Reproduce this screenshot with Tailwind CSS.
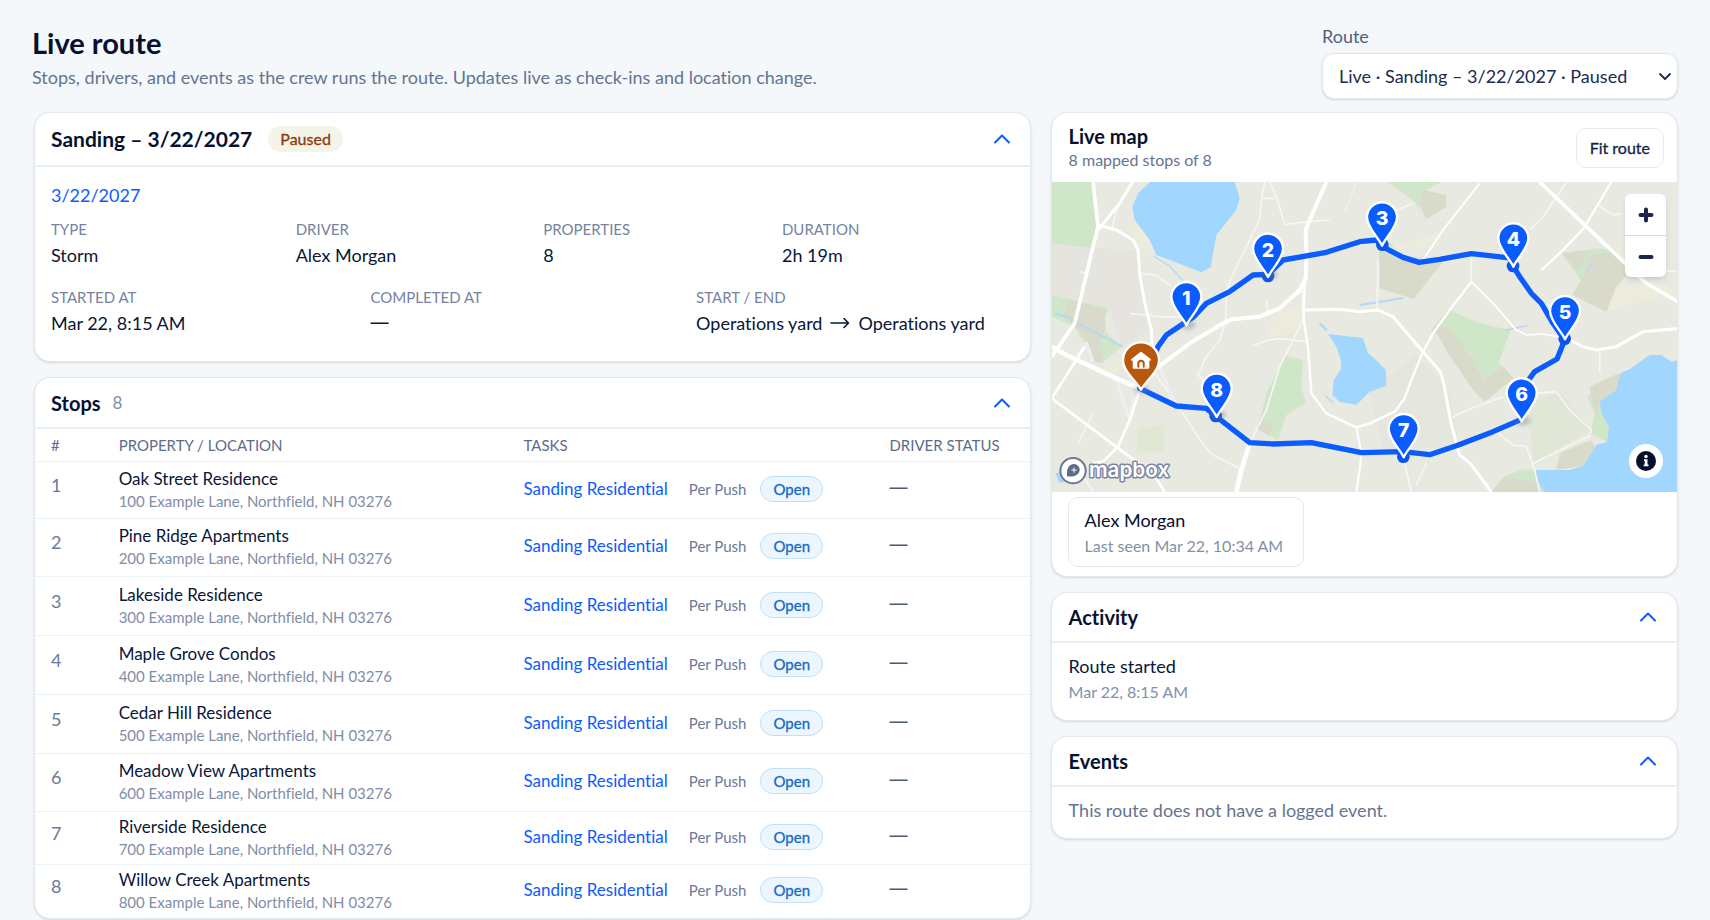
<!DOCTYPE html>
<html lang="en">
<head>
<meta charset="utf-8">
<meta name="viewport" content="width=device-width, initial-scale=1">
<title>Live route</title>
<script src="https://cdn.jsdelivr.net/npm/@tailwindcss/browser@4"></script>
</head>
<body class="min-h-screen bg-[#f4f8fb] font-['Lato',sans-serif] text-[18px] leading-6 text-[#0a1738] [font-variant-ligatures:none]">
<div class="flex flex-col px-8 pt-6">
  <header class="flex items-start justify-between">
    <div class="pt-[3px]">
      <h1 class="text-[29px] leading-8 font-bold text-[#06112f]">Live route</h1>
      <p class="mt-1.5 leading-6 text-[#64748f]">Stops, drivers, and events as the crew runs the route. Updates live as check-ins and location change.</p>
    </div>
    <div class="flex w-[356px] flex-col gap-[5px]">
      <label for="route" class="leading-6 text-[#4f5f80]">Route</label>
      <div class="relative">
        <select id="route" class="block h-[46px] w-full appearance-none rounded-xl border border-[#dfe6ef] bg-white pr-10 pl-4 text-[18px] text-[#1c2b50] shadow-sm">
          <option>Live · Sanding – 3/22/2027 · Paused</option>
        </select>
        <svg class="pointer-events-none absolute top-4 right-1.5 size-3.5" viewBox="0 0 14 14" fill="none" stroke="#1c2b50" stroke-width="1.800" stroke-linecap="round" stroke-linejoin="round"><path d="M2 5 7 10 12 5"/></svg>
      </div>
    </div>
  </header>

  <main class="mt-[13px] grid grid-cols-[996fr_627fr] items-start gap-5 pl-[2px]">
    <div class="flex min-w-0 flex-col gap-[15px]">
      <section class="rounded-2xl border border-[#e2e8f0] bg-white shadow-sm">
        <div class="flex h-[54px] items-center justify-between border-b-2 border-[#eaeff4] px-4">
          <div class="flex items-center gap-4">
            <h2 class="text-[21px] leading-7 font-bold text-[#06112f]">Sanding – 3/22/2027</h2>
            <span class="rounded-full bg-[#f4f4e8] px-3 text-[16px] leading-[26px] text-[#8f3a0b] [-webkit-text-stroke:0.3px]">Paused</span>
          </div>
          <button type="button" aria-label="Collapse route details" class="flex size-6 items-center justify-center"><svg class="h-4 w-5" viewBox="0 0 20 16" fill="none" stroke="#0b5cff" stroke-width="2" stroke-linecap="round" stroke-linejoin="round"><path d="M3 11.500 10 4.500 17 11.500"/></svg></button>
        </div>
        <div class="px-4 pt-4 pb-[26px]">
          <a href="#" class="block leading-6 text-[#0b5cff]">3/22/2027</a>
          <dl class="mt-2.5 grid grid-cols-[245fr_248fr_239fr_232fr]">
            <div><dt class="text-[15px] leading-6 text-[#75839f]">TYPE</dt><dd class="mt-0.5 leading-6">Storm</dd></div>
            <div><dt class="text-[15px] leading-6 text-[#75839f]">DRIVER</dt><dd class="mt-0.5 leading-6">Alex Morgan</dd></div>
            <div><dt class="text-[15px] leading-6 text-[#75839f]">PROPERTIES</dt><dd class="mt-0.5 leading-6">8</dd></div>
            <div><dt class="text-[15px] leading-6 text-[#75839f]">DURATION</dt><dd class="mt-0.5 leading-6">2h 19m</dd></div>
          </dl>
          <dl class="mt-[18px] grid grid-cols-[320fr_326fr_318fr]">
            <div><dt class="text-[15px] leading-6 text-[#75839f]">STARTED AT</dt><dd class="mt-0.5 leading-6">Mar 22, 8:15 AM</dd></div>
            <div><dt class="text-[15px] leading-6 text-[#75839f]">COMPLETED AT</dt><dd class="mt-0.5 font-['Inter',sans-serif] leading-6">—</dd></div>
            <div><dt class="text-[15px] leading-6 text-[#75839f]">START / END</dt><dd class="mt-0.5 flex items-center gap-2 leading-6 whitespace-nowrap">Operations yard <svg class="h-3 w-5" viewBox="0 0 20 12" fill="none" stroke="#0a1738" stroke-width="1.600" stroke-linecap="round" stroke-linejoin="round" role="img" aria-label="to"><path d="M1 6H18.500M14 1.500 18.500 6 14 10.500"/></svg> Operations yard</dd></div>
          </dl>
        </div>
      </section>

      <section class="rounded-2xl border border-[#e2e8f0] bg-white shadow-sm">
        <div class="flex h-[51px] items-center justify-between border-b-2 border-[#eaeff4] px-4">
          <div class="flex items-center gap-3">
            <h2 class="text-[20px] leading-6 font-bold text-[#06112f]">Stops</h2>
            <span class="text-[17px] text-[#8090aa]">8</span>
          </div>
          <button type="button" aria-label="Collapse stops" class="flex size-6 items-center justify-center"><svg class="h-4 w-5" viewBox="0 0 20 16" fill="none" stroke="#0b5cff" stroke-width="2" stroke-linecap="round" stroke-linejoin="round"><path d="M3 11.500 10 4.500 17 11.500"/></svg></button>
        </div>
        <table class="w-full table-fixed border-collapse text-left">
          <colgroup><col class="w-[6.800%]"><col class="w-[40.700%]"><col class="w-[36.800%]"><col></colgroup>
          <thead>
            <tr class="h-8 border-b border-[#edf1f6] text-[15px] text-[#5d6c8b]">
              <th class="pl-4 font-normal">#</th>
              <th class="pl-4 font-normal">PROPERTY / LOCATION</th>
              <th class="pl-4 font-normal">TASKS</th>
              <th class="pl-4 font-normal">DRIVER STATUS</th>
            </tr>
          </thead>
          <tbody id="stops"></tbody>
        </table>
      </section>
    </div>

    <div class="flex min-w-0 flex-col gap-[15px]">
      <section class="overflow-hidden rounded-2xl border border-[#e2e8f0] bg-white shadow-sm">
        <div class="flex h-[69px] items-center justify-between pr-[13px] pl-[17px]">
          <div>
            <h2 class="text-[20px] leading-6 font-bold text-[#06112f]">Live map</h2>
            <p class="text-[16px] leading-6 text-[#64748f]">8 mapped stops of 8</p>
          </div>
          <button type="button" class="h-10 rounded-[10px] border border-[#e2e8f0] px-[13px] text-[16px] text-[#14234a] [-webkit-text-stroke:0.3px]">Fit route</button>
        </div>
        <div class="relative">
          <svg class="block h-[310px] w-full bg-[#e8eae2]" viewBox="6 6 1878 930" preserveAspectRatio="xMidYMid slice" role="img" aria-label="Map of the route with eight stops">
            <defs>
              <pattern id="scrub" width="8" height="8" patternUnits="userSpaceOnUse"><rect width="8" height="8" fill="#dfe1d3"/><rect width="4" height="4" fill="#d3d3c2"/><rect x="4" y="4" width="4" height="4" fill="#d3d3c2"/></pattern>
              <path id="pin" d="M0 3C-10-20-45-52-45-82A45 45 0 1 1 45-82C45-52 10-20 0 3Z" fill="#0b5cff" stroke="#fff" stroke-width="7" stroke-linejoin="round"/>
              <filter id="soft" x="-50%" y="-50%" width="200%" height="200%"><feGaussianBlur stdDeviation="6"/></filter>
            </defs>
            <!-- land cover -->
            <path d="M6 190 125 205 262 210 280 285 300 450 215 500 180 385 6 345Z" fill="#e5e4df"/>
            <path d="M960 640 1100 520 1200 640 1230 800 1000 810Z" fill="#e5e7df"/>
            <g fill="#cfe7c8">
              <path d="M6 6H130L143 140 125 205 6 190Z"/>
              <path d="M6 345 178 385 152 440 215 500 160 545 130 535 75 440 6 410Z"/>
              <path d="M705 528 760 540 755 620 768 670 710 705 685 780 625 745 650 640Z"/>
              <path d="M1015 6H1175L1130 30 1105 80 1115 110 1095 65Z"/>
              <path d="M1535 218 1650 205 1690 210 1725 265 1670 385 1600 310Z"/>
              <path d="M1195 388 1290 430 1382 450 1347 550 1390 595 1310 610 1230 500 1145 450Z"/>
              <path d="M1645 610 1740 568 1805 525 1760 590 1690 660 1680 790 1622 760 1635 700 1613 650Z"/>
              <path d="M1325 936 1370 885 1420 868 1462 870 1490 936Z"/>
              <path d="M985 170 1030 195 1010 250 990 260Z"/>
            </g>
            <path d="M1435 665 1530 635 1622 750 1450 850Z" fill="#e0e7d7"/>
            <g fill="#ecebdc">
              <path d="M230 135 275 125 318 215 270 205 255 170Z"/>
              <path d="M685 395 757 370 752 445 660 475 645 465Z"/>
              <path d="M1690 318 1835 310 1880 335 1675 392Z"/>
              <path d="M1020 175 1060 195 1180 150 1150 205 1040 205Z"/>
              <path d="M1690 190 1720 185 1730 270Z"/>
              <path d="M210 530 200 580 160 570Z"/>
            </g>
            <path d="M265 745 345 735 340 815 260 820Z" fill="#dee8d2"/>
            <g fill="url(#scrub)">
              <path d="M60 360 165 388 168 450 150 480 160 550 130 545 100 460 40 410Z"/>
              <path d="M630 718 668 730 660 768 622 748Z"/>
              <path d="M1120 30 1190 45 1190 80 1130 118 1108 75Z"/>
              <path d="M990 215 1180 245 1092 357 990 325Z"/>
              <path d="M1542 225 1590 212 1620 215 1580 275Z"/>
              <path d="M1620 225 1690 215 1745 270 1700 320 1670 395 1568 345 1600 290Z"/>
              <path d="M1150 440 1200 445 1262 530 1302 600 1362 560 1392 595 1305 665 1270 630 1195 520Z"/>
              <path d="M1620 620 1708 580 1705 630 1650 665 1640 712Z"/>
              <path d="M1530 820 1625 780 1635 800 1600 858 1520 870Z"/>
              <path d="M1325 936 1362 890 1455 905 1480 936Z"/>
            </g>
            <!-- water -->
            <g fill="#a1d6ff">
              <path d="M302 6H555L570 55 560 90 500 165 483 262 455 277 385 250 320 225 300 180 255 120 248 80 265 40Z"/>
              <path d="M835 462 940 474 955 520 985 545 1008 570 1010 618 960 635 920 675 870 665 848 645 852 600 872 570 875 545 860 500Z"/>
              <path d="M1800 525H1835L1865 545 1885 540V936H1485L1460 900 1458 870 1560 870 1600 858 1640 795 1672 785 1678 740 1655 700 1650 665 1700 630 1712 580 1740 568Z"/>
              <path d="M18 880 40 875 50 905 28 908Z"/>
            </g>
            <g fill="none" stroke="#b4d8f3" stroke-width="4">
              <path d="M15 400 50 410 100 440 220 500" stroke-width="6"/>
              <path d="M310 228 360 258 400 302"/>
              <path d="M810 430 832 452" stroke-width="8"/>
              <path d="M930 375 985 367 1062 353" stroke-width="6"/>
              <path d="M1370 450 1435 436"/><path d="M1635 245 1605 280"/>
              <path d="M825 645 850 668"/>
            </g>
            <!-- minor roads -->
            <g fill="none" stroke="#f6f6f2" stroke-width="5" stroke-linejoin="round">
              <path d="M600 790 650 690 690 560 760 420 758 335 735 345"/>
              <path d="M300 560 370 655 465 800 490 825 575 868"/>
              <path d="M660 6 680 50 705 133 780 125 840 120"/><path d="M645 6 635 60 630 120 560 260 530 330 528 420 510 480 470 530 445 585 460 600"/><path d="M635 55H675"/>
              <path d="M240 400 350 412 430 408M275 280 320 285 365 320M90 275 107 280M185 150 205 75"/>
              <path d="M610 497 650 482 690 475 770 485"/><path d="M920 10 885 95" stroke-width="3"/>
              <path d="M985 240 982 390M1265 305V222M1550 6 1480 110 1440 150M1750 265 1885 275M1645 75 1690 105 1720 100"/>
              <path d="M1210 710 1265 685 1360 650M1450 640 1520 635 1560 690 1625 750 1620 768 1450 850"/>
              <path d="M1340 755 1390 795 1430 800 1455 870 1470 936M1060 830 1085 936M1130 850 1100 915M1650 510V580M650 360 655 400"/>
              <path d="M85 790 130 700M90 870 130 936M1020 100 1090 70"/>
              <path d="M70 540 110 490 130 545M200 600 240 720 250 640M330 560 370 660 280 640" stroke="#eeeef0" stroke-width="10"/>
            </g>
            <!-- main roads -->
            <g fill="none" stroke="#fff" stroke-width="9" stroke-linejoin="round">
              <path d="M130 6 145 140 130 200 75 430 6 530" stroke-width="11"/>
              <path d="M248 6 210 70 145 150"/>
              <path d="M145 135 200 150 250 180 265 210 270 280 285 370 305 450 308 520"/>
              <path d="M6 500 60 530 200 595 270 625" stroke-width="14"/>
              <path d="M320 565 420 490 520 430 545 418 630 410 690 385 750 330 768 295 770 230 768 150 780 120 830 6" stroke-width="12"/>
              <path d="M270 630 240 720 205 800 160 845 130 850" stroke-width="8"/>
              <path d="M6 655 210 808 310 880 345 936M6 655 105 500" stroke-width="8"/>
              <path d="M600 790 575 870 560 936" stroke-width="14"/>
              <path d="M765 390 870 388 930 395 985 390 1030 410 1120 515 1172 575 1182 610 1205 735 1230 825 1262 850 1325 936"/>
              <path d="M765 300 762 420 775 500 785 640 830 700 920 742 960 730 1035 695 1065 655 1085 600 1120 515 1150 460 1200 390 1265 305" stroke-width="7"/>
              <path d="M920 742 935 820 930 870 920 936" stroke-width="6"/>
              <path d="M1470 6 1600 130 1700 225 1790 310 1885 365" stroke-width="11"/>
              <path d="M1685 6 1602 145 1535 215 1475 270" stroke-width="7"/>
              <path d="M1290 10 1180 150 1120 240" stroke-width="6"/>
              <path d="M1265 305 1330 370 1400 450 1430 465 1480 462 1550 475" stroke-width="5"/>
              <path d="M1550 475 1600 500 1640 510 1700 500 1780 455 1885 445"/>
            </g>
            <!-- route -->
            <path d="M270 625 380 678 470 685 500 710 600 788 670 792 785 788 935 818 1060 815 1140 824 1220 797 1330 755 1415 718 1440 595 1455 575 1522 537 1545 480 1510 430 1475 370 1445 340 1410 290 1390 258 1390 235 1345 230 1265 221 1170 238 1108 247 1060 232 998 200 980 180 930 185 830 217 700 240 655 283 610 285 540 335 470 370 430 412 350 465 325 500 270 625" fill="none" stroke="#0b5cff" stroke-width="16" stroke-linejoin="round" stroke-linecap="round"/>
            <g fill="#0b55ea"><circle cx="655" cy="288" r="19"/><circle cx="998" cy="194" r="19"/><circle cx="1390" cy="258" r="19"/><circle cx="1545" cy="476" r="19"/><circle cx="1061" cy="830" r="19"/><circle cx="498" cy="708" r="19"/></g>
            <g fill="#6b7487" opacity=".4" filter="url(#soft)"><ellipse cx="415" cy="434" rx="22" ry="14"/><ellipse cx="1420" cy="722" rx="22" ry="14"/><ellipse cx="660" cy="284" rx="24" ry="12"/><ellipse cx="505" cy="704" rx="24" ry="12"/><ellipse cx="275" cy="628" rx="22" ry="12"/></g>
            <g class="font-['Inter',sans-serif] text-[58px] font-extrabold" fill="#fff" text-anchor="middle">
              <g transform="translate(410 433)"><use href="#pin"/><text y="-58">1</text></g>
              <g transform="translate(655 288)"><use href="#pin"/><text y="-58">2</text></g>
              <g transform="translate(997 194)"><use href="#pin"/><text y="-58">3</text></g>
              <g transform="translate(1391 257)"><use href="#pin"/><text y="-58">4</text></g>
              <g transform="translate(1546 475)"><use href="#pin"/><text y="-58">5</text></g>
              <g transform="translate(1416 722)"><use href="#pin"/><text y="-58">6</text></g>
              <g transform="translate(1062 829)"><use href="#pin"/><text y="-58">7</text></g>
              <g transform="translate(501 708)"><use href="#pin"/><text y="-58">8</text></g>
            </g>
            <!-- depot -->
            <g transform="translate(274 627)">
              <path d="M0 2C-12-22-54-52-54-86A54 54 0 1 1 54-86C54-52 12-22 0 2Z" fill="#b9570c" stroke="#fff" stroke-width="7" stroke-linejoin="round"/>
              <path d="M-22-88H-27L0-109 27-88H22V-64H-22Z" fill="#fff" stroke="#fff" stroke-width="6" stroke-linejoin="round"/>
              <path d="M-8-67V-77A8 8 0 0 1 8-77V-67" fill="none" stroke="#b9570c" stroke-width="6" stroke-linecap="round"/>
            </g>
            <!-- map provider mark -->
            <g>
              <circle cx="70" cy="872" r="38" fill="#fff" stroke="#6b7794" stroke-width="6"/>
              <path d="M52 889C49 868 57 853 73 852A17 17 0 0 1 90 869C89 884 74 892 52 889Z" fill="#5f6b88"/>
              <path d="M73 860 76 867 83 870 76 873 73 880 70 873 63 870 70 867Z" fill="#c9d0dc"/>
              <text x="118" y="890" class="font-['Inter',sans-serif] text-[62px] font-semibold" fill="#fff" stroke="#7a859f" stroke-width="9" stroke-linejoin="round" paint-order="stroke">mapbox</text>
            </g>
          </svg>
          <div class="absolute top-3 right-[11px] flex w-[41px] flex-col divide-y divide-[#d9dde3] rounded-md bg-white shadow-md">
            <button type="button" aria-label="Zoom in" class="flex h-[42px] items-center justify-center"><svg class="size-4" viewBox="0 0 16 16" stroke="#1b2747" stroke-width="4" stroke-linecap="round"><path d="M2.500 8H13.500M8 2.500V13.500"/></svg></button>
            <button type="button" aria-label="Zoom out" class="flex h-[41px] items-center justify-center"><svg class="size-4" viewBox="0 0 16 16" stroke="#1b2747" stroke-width="4" stroke-linecap="round"><path d="M2.500 8H13.500"/></svg></button>
          </div>
          <button type="button" aria-label="Map attribution" class="absolute right-3.5 bottom-3.5 flex size-[34px] items-center justify-center rounded-full bg-white"><svg class="size-5" viewBox="0 0 20 20"><circle cx="10" cy="10" r="10" fill="#070f2b"/><circle cx="10" cy="5.500" r="1.700" fill="#fff"/><path d="M8 8.300H11.500V13.500H12.500V15.300H7.700V13.500H8.700V10H8Z" fill="#fff"/></svg></button>
        </div>
        <div class="px-4 pt-[5px] pb-[9px]">
          <div class="inline-block rounded-[10px] border border-[#e2e8f0] pt-2.5 pr-5 pb-2 pl-4 align-top">
            <p class="leading-6 text-[#06112f]">Alex Morgan</p>
            <p class="mt-0.5 text-[16px] leading-6 text-[#8290aa]">Last seen Mar 22, 10:34 AM</p>
          </div>
        </div>
      </section>

      <section class="rounded-2xl border border-[#e2e8f0] bg-white shadow-sm">
        <div class="flex h-[50px] items-center justify-between border-b-2 border-[#eaeff4] px-[17px]">
          <h2 class="text-[20px] leading-6 font-bold text-[#06112f]">Activity</h2>
          <button type="button" aria-label="Collapse activity" class="flex size-6 items-center justify-center"><svg class="h-4 w-5" viewBox="0 0 20 16" fill="none" stroke="#0b5cff" stroke-width="2" stroke-linecap="round" stroke-linejoin="round"><path d="M3 11.500 10 4.500 17 11.500"/></svg></button>
        </div>
        <div class="px-[17px] pt-[11px] pb-4">
          <p class="leading-6">Route started</p>
          <p class="mt-0.5 text-[16px] leading-6 text-[#8290aa]">Mar 22, 8:15 AM</p>
        </div>
      </section>

      <section class="rounded-2xl border border-[#e2e8f0] bg-white shadow-sm">
        <div class="flex h-[50px] items-center justify-between border-b-2 border-[#eaeff4] px-[17px]">
          <h2 class="text-[20px] leading-6 font-bold text-[#06112f]">Events</h2>
          <button type="button" aria-label="Collapse events" class="flex size-6 items-center justify-center"><svg class="h-4 w-5" viewBox="0 0 20 16" fill="none" stroke="#0b5cff" stroke-width="2" stroke-linecap="round" stroke-linejoin="round"><path d="M3 11.500 10 4.500 17 11.500"/></svg></button>
        </div>
        <p class="px-[17px] pt-[11px] pb-4 leading-6 text-[#64748f]">This route does not have a logged event.</p>
      </section>
    </div>
  </main>
</div>
<script>
  const stops = [
    ["Oak Street Residence", "h-[57px]"],
    ["Pine Ridge Apartments", "h-[58px]"],
    ["Lakeside Residence", "h-[59px]"],
    ["Maple Grove Condos", "h-[59px]"],
    ["Cedar Hill Residence", "h-[59px]"],
    ["Meadow View Apartments", "h-[58px]"],
    ["Riverside Residence", "h-[53px]"],
    ["Willow Creek Apartments", "h-[54px]"],
  ];
  document.getElementById("stops").innerHTML = stops.map(([name, height], i) => `
    <tr class="${height} border-b border-[#edf2f7] last:border-b-0">
      <td class="pb-2.5 pl-4 text-[#6b7a97]">${i + 1}</td>
      <td class="pl-4">
        <div class="text-[17px] leading-[22px]">${name}</div>
        <div class="text-[15px] leading-[22px] text-[#7f8da8]">${i + 1}00 Example Lane, Northfield, NH 03276</div>
      </td>
      <td class="pb-0.5 pl-4">
        <div class="flex items-center whitespace-nowrap">
          <a href="#" class="mr-[21px] text-[17px] text-[#0b5cff]">Sanding Residential</a>
          <span class="mr-3.5 text-[15px] text-[#6b7a97]">Per Push</span>
          <span class="rounded-full border border-[#bfdffb] bg-[#ebf6ff] px-3 text-[15px] leading-6 text-[#1769c7] [-webkit-text-stroke:0.3px]">Open</span>
        </div>
      </td>
      <td class="pb-1 pl-4 font-['Inter',sans-serif] text-[#4c5b7c]">—</td>
    </tr>`).join("");
</script>
</body>
</html>
